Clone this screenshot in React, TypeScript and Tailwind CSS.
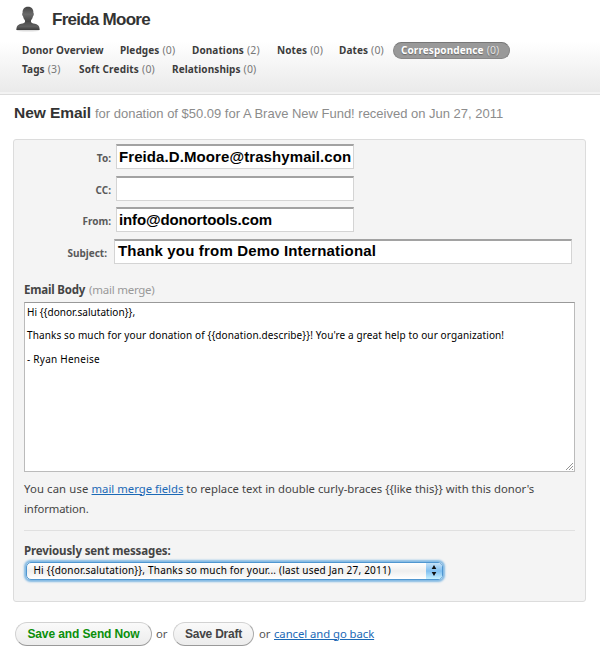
import type { ReactNode } from "react";

function NavItem({ label, count, className }: { label: string; count?: number; className: string }) {
  return (
    <a className={`flex shrink-0 items-center gap-[3px] whitespace-nowrap text-[10px] font-bold tracking-[0.09px] text-[#3c3c3c] ${className}`}>
      {label}
      {count !== undefined && <span className="text-[10.5px] font-normal tracking-[0.15px] text-[#777]">({count})</span>}
    </a>
  );
}

function Field({ label, value, labelClass, inputClass, textClass = "" }: {
  label: string; value: string; labelClass: string; inputClass: string; textClass?: string;
}) {
  return (
    <div className="flex h-[25px] items-start">
      <label className={`shrink-0 pt-[7px] text-right text-[10px] leading-[15px] font-bold text-[#5a5a5a] ${labelClass}`}>{label}</label>
      <div className={`flex h-[25px] shrink-0 items-center border border-t-2 border-[#d4d4d4] border-t-[#a2a2a2] bg-white pl-[2px] font-['Liberation_Sans',sans-serif] text-[15px] font-bold whitespace-nowrap text-black ${inputClass}`}>
        <span className={textClass}>{value}</span>
      </div>
    </div>
  );
}

function PillButton({ children, className }: { children: ReactNode; className: string }) {
  return (
    <button className={`flex h-[24px] shrink-0 items-center justify-center rounded-full border border-[#d2d2d2] border-r-[#aaa] border-b-[#999] bg-linear-to-b from-[#fafafa] to-[#ececec] font-['Liberation_Sans',sans-serif] text-[12px] font-bold whitespace-nowrap ${className}`}>
      {children}
    </button>
  );
}

export default function App() {
  return (
    <div className="h-[657px] w-[600px] overflow-hidden bg-white font-['Noto_Sans',sans-serif] text-[#444]">
      <header className="h-[95px] border-b border-[#dcdcdc] bg-[#f3f3f3]">
        <div className="h-[92px] bg-linear-to-b from-white from-45% to-[#eaeaea]">
          <div className="flex h-[41px] items-start pl-4">
            <svg width="24" height="27" viewBox="0 0 24 27" className="mt-[6px] shrink-0">
              <defs>
                <linearGradient id="head" x1="0" y1="0" x2="0" y2="1">
                  <stop offset="0" stopColor="#444" />
                  <stop offset="0.5" stopColor="#6a6a6a" />
                  <stop offset="1" stopColor="#444" />
                </linearGradient>
                <linearGradient id="torso" x1="0" y1="0" x2="0" y2="1">
                  <stop offset="0" stopColor="#3c3c3c" />
                  <stop offset="0.7" stopColor="#606060" />
                  <stop offset="1" stopColor="#3c3c3c" />
                </linearGradient>
              </defs>
              <ellipse cx="12" cy="24.6" rx="11.5" ry="1" fill="#ddd" />
              <path d="M9 12h6v4c1 1.500 3.500 1.500 5.500 2.300C23 19.300 23.500 21 23.700 24H.3C.5 21 1 19.300 3.500 18.300 5.500 17.500 8 17.500 9 16z" fill="url(#torso)" />
              <path d="M12 .8c3.800 0 5.600 2.600 5.400 6.200.8.300.5 2.600-.4 3.300-.6 3-2.600 5.600-5 5.600s-4.400-2.600-5-5.600c-.9-.7-1.200-3-.4-3.300C6.400 3.400 8.200.8 12 .8z" fill="url(#head)" />
            </svg>
            <h1 className="mt-[9px] ml-[12px] font-['Liberation_Sans',sans-serif] text-[17px] leading-[22px] font-bold tracking-[-0.74px] whitespace-nowrap text-[#333]">Freida Moore</h1>
          </div>
          <nav>
            <div className="flex h-[19px] items-center pl-[22px]">
              <NavItem label="Donor Overview" className="w-[98px]" />
              <NavItem label="Pledges" count={0} className="w-[72px]" />
              <NavItem label="Donations" count={2} className="w-[85px]" />
              <NavItem label="Notes" count={0} className="w-[62px]" />
              <NavItem label="Dates" count={0} className="w-[54px]" />
              <a className="flex h-[17px] w-[117px] shrink-0 items-center gap-[3px] rounded-full border border-[#888] border-t-[#777] bg-[#999] pl-[7px] text-[10px] font-bold tracking-[0.09px] whitespace-nowrap text-white [text-shadow:0_1px_1px_#666]">
                Correspondence
                <span className="text-[10.5px] font-normal tracking-[0.15px] text-[#e4e4e4]">(0)</span>
              </a>
            </div>
            <div className="flex h-[19px] items-center pl-[22px]">
              <NavItem label="Tags" count={3} className="w-[57px]" />
              <NavItem label="Soft Credits" count={0} className="w-[93px] tracking-[0.18px]!" />
              <NavItem label="Relationships" count={0} className="w-[90px]" />
            </div>
          </nav>
        </div>
      </header>

      <div className="flex h-[44px] items-center pl-[14px] font-['Liberation_Sans',sans-serif] whitespace-nowrap">
        <h2 className="w-[81px] shrink-0 pb-[8px] text-[15.500px] font-bold tracking-[-0.05px] text-[#333]">New Email</h2>
        <span className="pb-[7px] text-[13px] tracking-[-0.01px] text-[#8c8c8c]">for donation of $50.09 for A Brave New Fund! received on Jun 27, 2011</span>
      </div>

      <section className="ml-[13px] flex h-[463px] w-[573px] flex-col rounded-[3px] border border-[#dcdcdc] bg-[#f4f4f4]">
        <div className="flex flex-col gap-[6.500px] pt-[4px]">
          <Field label="To:" value="Freida.D.Moore@trashymail.con" labelClass="w-[97px]" inputClass="ml-[5px] w-[238px]" textClass="tracking-[0.09px]" />
          <Field label="CC:" value="" labelClass="w-[97px]" inputClass="ml-[5px] w-[238px]" />
          <Field label="From:" value="info@donortools.com" labelClass="w-[97px]" inputClass="ml-[5px] w-[238px]" textClass="tracking-[-0.13px]" />
          <Field label="Subject:" value="Thank you from Demo International" labelClass="w-[93px]" inputClass="ml-[7px] w-[458px] pl-[3px]" textClass="tracking-[0.17px]" />
        </div>

        <div className="mx-[10px] mt-[16px] flex h-[20px] items-center gap-[4px] text-[11.500px] whitespace-nowrap">
          <b className="tracking-[-0.2px]">Email Body</b>
          <span className="tracking-[-0.25px] text-[#999]">(mail merge)</span>
        </div>
        <div className="relative mt-[2px] ml-[10px] h-[170px] w-[551px] shrink-0 border border-[#bbb] border-t-[#999] bg-white pt-[3px] pl-[2px] text-[10px] leading-[12px] whitespace-pre text-black">
          <p className="tracking-[0.05px]">{"Hi {{donor.salutation}},"}</p>
          <p className="mt-[11.500px] tracking-[0.12px]">{"Thanks so much for your donation of {{donation.describe}}! You're a great help to our organization!"}</p>
          <p className="mt-[11.500px] tracking-[0.25px]">- Ryan Heneise</p>
          <svg width="9" height="9" viewBox="0 0 9 9" className="absolute right-0 bottom-0" stroke="#888" strokeWidth="0.9">
            <path d="M1 8 8 1M4 8 8 4M7 8 8 7" />
          </svg>
        </div>

        <p className="mt-[7px] ml-[10px] h-[40px] text-[11.300px] leading-[20px] whitespace-nowrap">
          <span className="tracking-[0.13px]">You can use </span>
          <a className="text-[#1b69b6] underline">mail merge fields</a>
          {" to replace text in double curly-braces {{like this}} with this donor's"}
          <br />
          <span className="tracking-[-0.12px]">information.</span>
        </p>
        <hr className="mx-[10px] mt-[11px] border-[#e0e0e0]" />
        <b className="mt-[11px] ml-[10px] block text-[11.500px] leading-[18px] tracking-[-0.13px] whitespace-nowrap">Previously sent messages:</b>
        <div className="mt-[2px] ml-[12px] flex h-[18px] w-[417px] shrink-0 items-stretch overflow-hidden rounded-[5px] border border-[#4f96d0] bg-linear-to-b from-white via-[#eeeeee] to-white shadow-[0_0_2px_1.500px_#82b9e3]">
          <span className="flex flex-1 items-center pl-[6.500px] text-[10px] tracking-[0.2px] whitespace-nowrap text-black">
            {"Hi {{donor.salutation}}, Thanks so much for your... (last used Jan 27, 2011)"}
          </span>
          <span className="flex w-[16px] items-center justify-center bg-linear-to-b from-[#c5e2f8] via-[#80bff0] to-[#c5f0ff]">
            <svg width="6" height="11" viewBox="0 0 6 11" fill="#111">
              <path d="M3 0 5.300 4H.7zM3 11 .7 7h4.600z" />
            </svg>
          </span>
        </div>
      </section>

      <div className="mt-[20px] ml-[15px] flex h-[24px] items-center text-[11.300px] whitespace-nowrap text-[#555]">
        <PillButton className="w-[137px] tracking-[-0.11px] text-[#0a8f0a]">Save and Send Now</PillButton>
        <span className="ml-[4px] w-[17px]">or</span>
        <PillButton className="w-[81px] tracking-[-0.22px] text-[#444]">Save Draft</PillButton>
        <span className="ml-[5px] w-[15px]">or</span>
        <a className="tracking-[-0.05px] text-[#1b69b6] underline">cancel and go back</a>
      </div>
    </div>
  );
}
